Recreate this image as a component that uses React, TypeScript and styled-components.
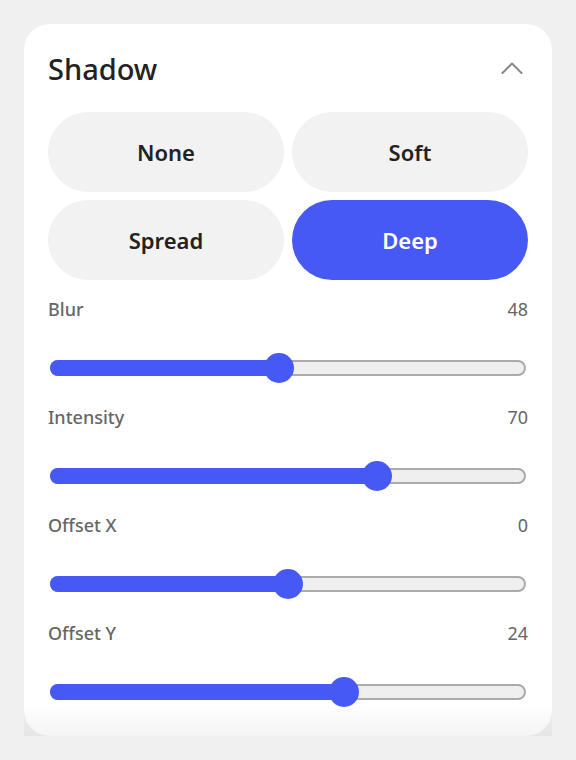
import React, { useState } from 'react';
import styled, { createGlobalStyle } from 'styled-components';

const GlobalStyle = createGlobalStyle`
  * { box-sizing: border-box; }
  body {
    margin: 0;
    background: #f0f0f0;
    font-family: "Noto Sans", "Open Sans", sans-serif;
  }
`;

const Page = styled.div`
  padding: 24px;
`;

const Frame = styled.div`
  position: relative;
  width: 528px;
  height: 712px;
`;

const Card = styled.div`
  height: 100%;
  background: #ffffff;
  border-radius: 26px;
  padding: 24px;
  overflow: hidden;
`;

const Fade = styled.div`
  position: absolute;
  left: 0;
  right: 0;
  bottom: 0;
  height: 32px;
  background: linear-gradient(rgba(0, 0, 0, 0), rgba(0, 0, 0, 0.045));
  pointer-events: none;
`;

const Header = styled.div`
  display: flex;
  align-items: center;
  justify-content: space-between;
  height: 40px;
  margin-bottom: 24px;
`;

const Title = styled.h2`
  margin: 0;
  font-size: 29px;
  font-weight: 500;
  color: #222;
`;

const Collapse = styled.button`
  display: flex;
  align-items: center;
  justify-content: center;
  width: 32px;
  height: 32px;
  padding: 0;
  border: none;
  background: none;
  color: #888;
  cursor: pointer;
`;

const Presets = styled.div`
  display: grid;
  grid-template-columns: 1fr 1fr;
  grid-auto-rows: 80px;
  gap: 8px;
`;

const Preset = styled.button<{ $active: boolean }>`
  border: none;
  border-radius: 40px;
  background: ${(p) => (p.$active ? '#4759f5' : '#f2f2f2')};
  color: ${(p) => (p.$active ? '#ffffff' : '#222222')};
  font-family: inherit;
  font-size: 22px;
  font-weight: 600;
  cursor: pointer;
`;

const Sliders = styled.div`
  display: flex;
  flex-direction: column;
  gap: 21px;
  margin-top: 16px;
`;

const Group = styled.div`
  display: flex;
  flex-direction: column;
`;

const LabelRow = styled.div`
  display: flex;
  justify-content: space-between;
  height: 26px;
  line-height: 26px;
  font-size: 18px;
  color: #666;
`;

const Name = styled.span`
  font-weight: 500;
`;

const SliderWrap = styled.div`
  position: relative;
  height: 30px;
  margin: 31px 2px 0;
  display: flex;
  align-items: center;
`;

const Track = styled.div`
  position: relative;
  width: 100%;
  height: 16px;
  border-radius: 8px;
  border: 2px solid #ababab;
  background: #efefef;
`;

const Fill = styled.div`
  position: absolute;
  left: -2px;
  top: -2px;
  bottom: -2px;
  border-radius: 8px;
  background: #4759f5;
`;

const Thumb = styled.div`
  position: absolute;
  top: 0;
  width: 30px;
  height: 30px;
  margin-left: -15px;
  border-radius: 50%;
  background: #4759f5;
`;

type SliderDef = { label: string; value: number; min: number; max: number };

const sliders: SliderDef[] = [
  { label: 'Blur', value: 48, min: 0, max: 100 },
  { label: 'Intensity', value: 70, min: 0, max: 100 },
  { label: 'Offset X', value: 0, min: -50, max: 50 },
  { label: 'Offset Y', value: 24, min: -16, max: 48 },
];

const presets = ['None', 'Soft', 'Spread', 'Deep'];

const Slider: React.FC<SliderDef> = ({ label, value, min, max }) => {
  const p = (value - min) / (max - min);
  return (
    <Group>
      <LabelRow>
        <Name>{label}</Name>
        <span>{value}</span>
      </LabelRow>
      <SliderWrap>
        <Track>
          <Fill style={{ width: `calc(15px + ${p} * (100% - 26px))` }} />
        </Track>
        <Thumb style={{ left: `calc(15px + ${p} * (100% - 30px))` }} />
      </SliderWrap>
    </Group>
  );
};

export default function App() {
  const [active, setActive] = useState('Deep');
  return (
    <Page>
      <GlobalStyle />
      <Frame>
        <Card>
          <Header>
            <Title>Shadow</Title>
            <Collapse aria-label="Collapse">
              <svg width="24" height="24" viewBox="0 0 24 24" fill="none" stroke="currentColor" strokeWidth="2" strokeLinecap="round" strokeLinejoin="round">
                <path d="M2.5 17 12 7.5l9.5 9.5" />
              </svg>
            </Collapse>
          </Header>
          <Presets>
            {presets.map((name) => (
              <Preset key={name} $active={active === name} onClick={() => setActive(name)}>
                {name}
              </Preset>
            ))}
          </Presets>
          <Sliders>
            {sliders.map((s) => (
              <Slider key={s.label} {...s} />
            ))}
          </Sliders>
        </Card>
        <Fade />
      </Frame>
    </Page>
  );
}
